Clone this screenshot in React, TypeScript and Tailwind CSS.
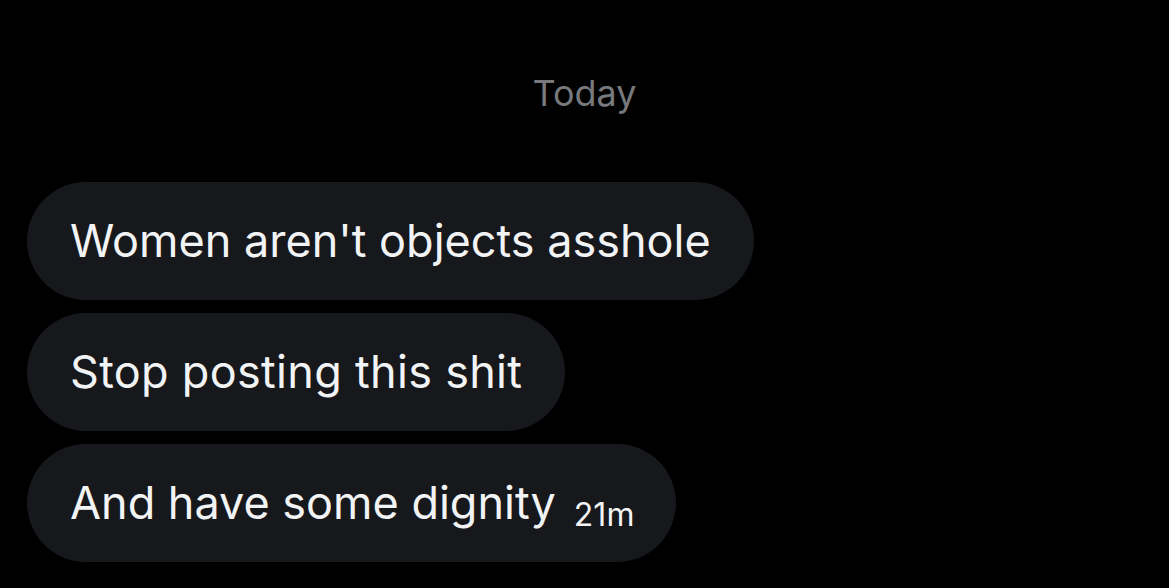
export default function App() {
  const font = { fontFamily: 'Inter, "Noto Sans", sans-serif' };
  return (
    <div className="w-[1169px] h-[588px] bg-black overflow-hidden" style={font}>
      <div className="flex justify-center pt-[72px] h-[182px]">
        <span className="text-[36px] leading-[42px] text-[#77797d]">Today</span>
      </div>
      <div className="flex flex-col items-start gap-[13px] pl-[27px]">
        <div className="h-[118px] rounded-full bg-[#16181c] px-[43px] flex items-center">
          <span className="text-[45px] text-[#f2f3f4]">Women aren't objects asshole</span>
        </div>
        <div className="h-[118px] rounded-full bg-[#16181c] px-[43px] flex items-center">
          <span className="text-[45px] text-[#f2f3f4] tracking-[0.3px]">Stop posting this shit</span>
        </div>
        <div className="h-[118px] rounded-full bg-[#16181c] pl-[43px] pr-[42px] flex items-center">
          <span className="text-[45px] text-[#f2f3f4]">And have some dignity</span>
          <span className="ml-[18px] mt-[24px] text-[32px] text-[#f2f3f4]">21m</span>
        </div>
      </div>
    </div>
  );
}
